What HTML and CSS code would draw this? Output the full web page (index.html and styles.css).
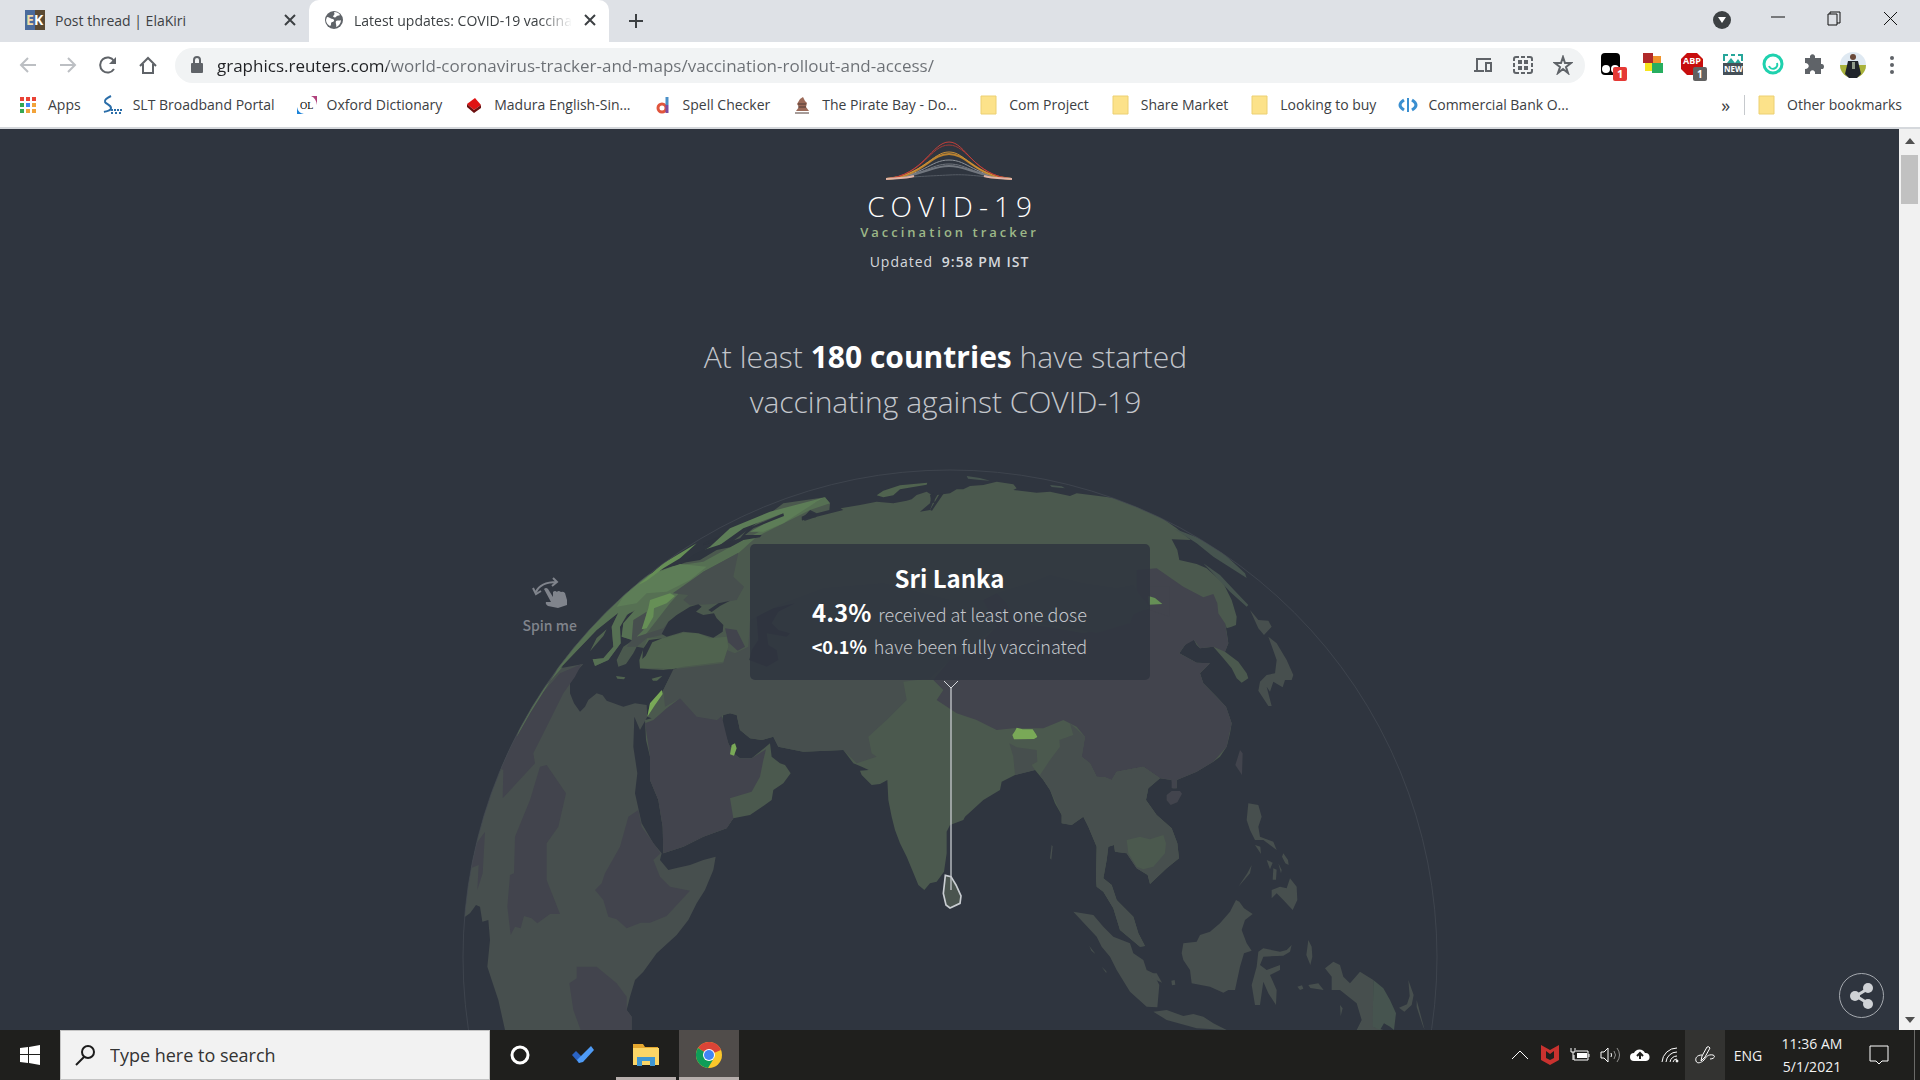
FILE: index.html
```html
<!DOCTYPE html>
<html lang="en">
<head>
    <meta charset="UTF-8">
    <meta name="viewport" content="width=device-width, initial-scale=1.0">
    <title>Latest updates: COVID-19 vaccination charts and maps</title>
    <link rel="stylesheet" href="styles.css">
</head>
<body>
    <header class="browser">
        <div class="tab-strip">
            <div class="tab">
                <svg class="favicon" viewBox="0 0 20 20" aria-hidden="true">
                    <rect width="10" height="20" fill="#4a6a9b"/>
                    <rect x="10" width="10" height="20" fill="#5a4a34"/>
                    <text x="1" y="15" font-size="14" font-weight="700" fill="#f3dca8">E</text>
                    <text x="9" y="15" font-size="14" font-weight="700" fill="#ffffff">K</text>
                </svg>
                <span class="tab-title">Post thread | ElaKiri</span>
                <button class="tab-close" aria-label="Close tab"><svg viewBox="0 0 12 12"><path d="M1 1l10 10M11 1L1 11"/></svg></button>
            </div>
            <div class="tab active">
                <svg class="favicon" viewBox="0 0 20 20" aria-hidden="true">
                    <circle cx="10" cy="10" r="9" fill="#5f6368"/>
                    <path d="M3 7c2 0 4 2 6 2 2 1 1 3-1 3-2 1 0 3-2 4-2-1-4-3-4-6zM10 2c3 0 5 1 6 3-1 1-3 0-4 2-1 1-3 0-3-1 1-1 2-1 1-4zM12 11c2-1 4 0 5-1 0 3-2 6-5 7 1-2-1-4 0-6z" fill="#fff"/>
                </svg>
                <span class="tab-title fade">Latest updates: COVID-19 vaccination</span>
                <button class="tab-close" aria-label="Close tab"><svg viewBox="0 0 12 12"><path d="M1 1l10 10M11 1L1 11"/></svg></button>
            </div>
            <button class="new-tab" aria-label="New tab"><svg viewBox="0 0 16 16"><path d="M8 1v14M1 8h14"/></svg></button>
            <div class="window-controls">
                <button aria-label="Search tabs"><svg viewBox="0 0 20 20"><circle cx="10" cy="11" r="9" fill="#3c4043"/><path d="M6 8h8l-4 6z" fill="#fff"/></svg></button>
                <button aria-label="Minimize"><svg viewBox="0 0 20 20"><path d="M3 8h14" class="thin"/></svg></button>
                <button aria-label="Restore"><svg viewBox="0 0 20 20"><path d="M4 5h9v11H4zM6 5V3h10v11h-3" class="thin"/></svg></button>
                <button aria-label="Close"><svg viewBox="0 0 20 20"><path d="M4 3l13 13M17 3L4 16" class="thin"/></svg></button>
            </div>
        </div>

        <div class="toolbar">
            <nav class="nav-buttons">
                <button class="dim" aria-label="Back"><svg viewBox="0 0 20 20"><path d="M18 10H3M10 3l-7 7 7 7"/></svg></button>
                <button class="dim" aria-label="Forward"><svg viewBox="0 0 20 20"><path d="M2 10h15M10 3l7 7-7 7"/></svg></button>
                <button aria-label="Reload"><svg viewBox="0 0 20 20"><path d="M16 14a7.500 7.500 0 1 1 0-8"/><path d="M18 2v7h-7z" class="solid"/></svg></button>
                <button aria-label="Home"><svg viewBox="0 0 20 20"><path d="M2 11l8-8 8 8M5 9v9h10V9"/></svg></button>
            </nav>
            <div class="omnibox">
                <svg class="lock" viewBox="0 0 14 18" aria-hidden="true"><rect x="1" y="7" width="12" height="10" rx="1" fill="#5f6368"/><path d="M4 7V4a3 3 0 0 1 6 0v3" fill="none" stroke="#5f6368" stroke-width="2"/></svg>
                <input class="url" type="text" aria-label="Address" value="graphics.reuters.com/world-coronavirus-tracker-and-maps/vaccination-rollout-and-access/">
                <button aria-label="Send to device"><svg viewBox="0 0 20 20"><path d="M18 4H4v11M1 16h10M13 8h5v8h-5z"/></svg></button>
                <button aria-label="QR code"><svg viewBox="0 0 20 20"><path d="M1 6V4q0-2 2-2h3M8 2h4M14 2h3q2 0 2 2v2M1 8v4M19 8v4M1 14v2q0 2 2 2h3M8 18h4M14 18h3q2 0 2-2v-2"/><path d="M5 5h4v4H5zM11 5h4v4h-4zM5 11h4v4H5zM11 11h4v4h-4z" class="solid"/></svg></button>
                <button aria-label="Bookmark"><svg viewBox="0 0 20 20"><path d="M10 2l2 6h6l-5 4 2 6-5-4-5 4 2-6-5-4h6z"/></svg></button>
            </div>
            <div class="extensions">
                <button aria-label="Tampermonkey"><svg viewBox="0 0 28 32"><rect x="2" y="4" width="19" height="22" rx="4" fill="#000"/><circle cx="7" cy="20" r="4" fill="#fff"/><circle cx="16" cy="20" r="4" fill="#fff"/><rect x="14" y="18" width="14" height="14" rx="2" fill="#e53935"/><text x="18" y="29" font-size="11" font-weight="700" fill="#fff">1</text></svg></button>
                <button aria-label="Colour extension"><svg viewBox="0 0 28 32"><path d="M4 4h10v10H4z" fill="#b02a2a"/><path d="M14 7h8v8h-8z" fill="#f0932b"/><path d="M6 14h8v8H6z" fill="#f6e51c"/><path d="M13 14h11v10H13z" fill="#27ae60"/></svg></button>
                <button aria-label="Adblock Plus"><svg viewBox="0 0 28 32"><path d="M8 4h10l6 6v10l-6 6H8l-6-6V10z" fill="#c70d0d"/><text x="4" y="15" font-size="9" font-weight="700" fill="#fff">ABP</text><rect x="14" y="18" width="14" height="14" rx="2" fill="#616161"/><text x="18" y="29" font-size="10" font-weight="700" fill="#fff">1</text></svg></button>
                <button aria-label="Screen capture"><svg viewBox="0 0 28 32"><path d="M5 12V6h4M12 6h4M19 6h4v6" fill="none" stroke="#26a69a" stroke-width="2"/><path d="M8 14l4-5 4 5 3-4 3 4z" fill="#26a69a"/><rect x="4" y="14" width="20" height="12" fill="#455058"/><text x="5" y="23" font-size="8" font-weight="700" fill="#fff">NEW</text></svg></button>
                <button aria-label="Assistant"><svg viewBox="0 0 28 32"><circle cx="14" cy="15" r="9" fill="none" stroke="#1fd1ae" stroke-width="3"/><path d="M10 17a4 4 0 0 0 8-3" fill="none" stroke="#1fd1ae" stroke-width="2"/></svg></button>
                <button aria-label="Extensions"><svg viewBox="0 0 28 32"><path d="M6 9h5c-1-5 6-5 5 0h6v6c4-1 4 6 0 5v5h-6c1-5-6-5-5 0H6v-5c5 0 5-6 0-6z" fill="#5f6368"/></svg></button>
                <button aria-label="Profile"><svg viewBox="0 0 28 32"><circle cx="14" cy="16" r="13" fill="#dfe9f2"/><path d="M1 16h26a13 13 0 0 1-26 0z" fill="#a9b23a"/><circle cx="14" cy="8" r="3" fill="#6b4a3a"/><path d="M9 12h10l3 13-4 4h-8l-4-4z" fill="#20242b"/><path d="M13 13h3v7h-3z" fill="#8f9a8a"/></svg></button>
                <button aria-label="Menu"><svg viewBox="0 0 28 32"><circle cx="14" cy="9" r="2"/><circle cx="14" cy="16" r="2"/><circle cx="14" cy="23" r="2"/></svg></button>
            </div>
        </div>

        <nav class="bookmarks">
            <a href="#"><svg viewBox="0 0 20 20"><path d="M2 2h4v4H2zM8 2h4v4H8zM14 2h4v4h-4z" fill="#ea4335"/><path d="M2 8h4v4H2z" fill="#34a853"/><path d="M8 8h4v4H8z" fill="#4285f4"/><path d="M14 8h4v4h-4zM8 14h4v4H8zM14 14h4v4h-4z" fill="#f2a33a"/><path d="M2 14h4v4H2z" fill="#34a853"/></svg>Apps</a>
            <a href="#"><svg viewBox="0 0 20 20"><path d="M8 1C4 3 1 5 2 7s6 3 6 6-4 3-7 4" fill="none" stroke="#2a6da8" stroke-width="2"/><path d="M8 14h2v2H8zM11 14h2v2h-2zM14 14h2v2h-2zM17 14h2v2h-2zM8 17h2v2H8zM12 17h2v2h-2zM16 17h2v2h-2z" fill="#2a6da8"/></svg>SLT Broadband Portal</a>
            <a href="#"><svg viewBox="0 0 20 20"><path d="M14 1h6v9q-1-7-6-9z" fill="#b0417c"/><path d="M0 12q1 6 7 7H0z" fill="#1c83d8"/><text x="3" y="14" class="serif" font-size="10">OL</text></svg>Oxford Dictionary</a>
            <a href="#"><svg viewBox="0 0 20 20"><path d="M3 9l8-6 6 7-7 5z" fill="#e01212"/><path d="M3 9l7 6 7-5v3l-7 5-7-6z" fill="#6d1010"/></svg>Madura English-Sin...</a>
            <a href="#"><svg viewBox="0 0 20 20"><circle cx="9" cy="13" r="4" fill="none" stroke="#e0553d" stroke-width="3"/><path d="M14 2v8" stroke="#4a90c8" stroke-width="3"/><path d="M14 10v8" stroke="#7b4ba0" stroke-width="3"/></svg>Spell Checker</a>
            <a href="#"><svg viewBox="0 0 20 20"><path d="M4 16l3-4-2-3 3-5 3-2 2 4 2 2-1 4 3 4z" fill="#9c6a58"/><path d="M3 18h14M6 9h8M6 12h8" stroke="#4f3a34"/></svg>The Pirate Bay - Do...</a>
            <a href="#"><svg viewBox="0 0 20 20"><path class="folder" d="M2 1h15v18H2z"/></svg>Com Project</a>
            <a href="#"><svg viewBox="0 0 20 20"><path class="folder" d="M2 1h15v18H2z"/></svg>Share Market</a>
            <a href="#"><svg viewBox="0 0 20 20"><path class="folder" d="M2 1h15v18H2z"/></svg>Looking to buy</a>
            <a href="#"><svg viewBox="0 0 20 20"><path d="M6 5q-8 5 0 10M14 5q8 5 0 10" fill="none" stroke="#3a8fd0" stroke-width="3"/><path d="M10 3v14" stroke="#3a8fd0" stroke-width="2"/></svg>Commercial Bank O...</a>
            <button class="more" aria-label="More bookmarks">»</button>
            <a href="#" class="other"><svg viewBox="0 0 20 20"><path class="folder" d="M2 1h15v18H2z"/></svg>Other bookmarks</a>
        </nav>
    </header>

    <div class="viewport">
        <main class="page">
            <div class="brand">
                <svg class="brand-mark" viewBox="0 0 126 40" aria-hidden="true">
                    <path d="M0 38C38 35 44 35 63 34S88 35 126 38" stroke="#555b64"/>
                    <path d="M0 38C38 35 44 25 63 25S88 35 126 38" stroke="#71767e" stroke-width="2"/>
                    <path d="M0 38C38 35 44 23 63 23S88 35 126 38" stroke="#71767e"/>
                    <path d="M0 38C38 35 44 19 63 19S88 35 126 38" stroke="#8e9298"/>
                    <path d="M0 38C38 35 44 13 63 13S88 35 126 38" stroke="#b9812f" stroke-width="2"/>
                    <path d="M0 38C38 34 46 11 63 11S86 34 126 38" stroke="#cf9338"/>
                    <path d="M0 38C38 34 44 4 63 4S88 34 126 38" stroke="#a33a35"/>
                    <path d="M0 38C38 34 46 1 63 1S86 34 126 38" stroke="#c2403a"/>
                    <path d="M0 38C16 37 22 37 28 35M126 38C110 37 104 37 98 35" stroke="#e0b3a4" stroke-width="2"/>
                </svg>
                <p class="brand-name">COVID-19</p>
                <p class="brand-sub">Vaccination tracker</p>
                <p class="updated">Updated <time>9:58 PM IST</time></p>
            </div>

            <h1>At least <strong>180 countries</strong> have started<br>vaccinating against COVID-19</h1>

            <section class="stage">
                <svg class="globe" viewBox="0 0 3000 1710" aria-label="Globe of vaccination rates">
                    <defs>
                        <clipPath id="sphere"><circle cx="1500" cy="1491" r="1461"/></clipPath>
                    </defs>
                    <g clip-path="url(#sphere)">
                        <!-- Africa -->
                        <path class="c-low" d="M0 1370V760L330 625 400 612 375 640 360 665 360 700 372 730 390 755 405 740 415 720 440 700 458 706 470 722 520 740 555 730 590 735 592 770 570 810 553 770 550 860 562 940 555 1000 575 1090 610 1150 635 1180 630 1200 655 1230 680 1224 720 1215 760 1200 797 1190 790 1230 765 1290 740 1330 715 1380 680 1425 620 1480 580 1535 555 1560 540 1610 530 1650 545 1670V1710H165L145 1620 125 1560 112 1520 120 1440 115 1380 97 1385 90 1340 78 1335 60 1360 45 1370Z"/>
                        <path class="c-none" d="M330 640L395 612 375 650 340 700 290 800 250 880 255 910 158 1015 160 930 100 900Z"/>
                        <path class="c-none" d="M290 915L348 1000 325 1100 290 1150 290 1260 330 1362 300 1362 262 1390 245 1375 222 1368 212 1405 195 1400 182 1425 172 1340 180 1245 192 1240 195 1130 240 1020 270 920Z"/>
                        <path class="c-none" d="M565 1050L535 1070 510 1160 465 1240 455 1270 435 1290 460 1320 475 1370 500 1378 530 1405 572 1388 600 1388 650 1368 720 1292 660 1280 630 1250 610 1200 632 1180 575 1100Z"/>
                        <path class="c-none" d="M380 1520H440L500 1570 530 1610 530 1650 545 1670V1710H392L370 1650 358 1570 380 1555Z"/>
                        <path class="c-none" d="M105 1115L98 1240 82 1290 86 1215 62 1225 72 1160Z"/>
                        <path class="c-mid2" d="M340 618L320 632 240 760 200 830 225 750Z"/>

                        <!-- Eurasia -->
                        <path class="c-russia" d="M1125 112L1140 130 1138 150 1100 160 1080 150 1055 178 1065 182 1100 170 1180 150 1172 145 1230 135 1280 125 1330 130 1370 122 1385 118 1400 105 1430 95 1445 105 1440 130 1410 155 1440 150 1448 130 1462 105 1500 100 1520 88 1540 88 1560 78 1600 75 1640 65 1690 73 1700 85 1690 90 1760 98 1800 95 1860 108 1880 100 1940 107 1975 112 2020 120 2080 145 2130 170 2180 205 2222 240 2165 238 2182 270 2188 300 2240 312 2270 325 2320 370 2345 420 2360 470 2358 495 2345 500 2330 505 2325 490 2330 515 2335 550 2325 575 2345 590 2365 605 2390 640 2395 655 2375 668 2360 655 2345 625 2320 595 2290 560 2250 565 2240 555 2232 540 2222 540 2205 555 2188 580 2240 608 2280 610 2250 640 2260 670 2300 710 2328 740 2345 790 2340 820 2330 860 2310 890 2290 905 2240 935 2180 960 2180 985 2168 985 2165 960 2130 955 2095 985 2088 1020 2120 1065 2165 1105 2182 1150 2187 1195 2150 1225 2100 1272 2093 1245 2060 1225 2030 1180 1995 1175 1992 1155 1975 1160 1970 1200 1960 1255 1985 1275 2000 1320 2050 1370 2065 1420 2085 1458 2070 1460 2010 1410 1990 1345 1960 1295 1940 1280 1938 1255 1940 1160 1915 1100 1900 1070 1865 1095 1835 1090 1835 1065 1815 1030 1800 990 1780 960 1755 930 1695 945 1655 965 1650 990 1600 1020 1545 1070 1540 1080 1500 1095 1490 1115 1490 1180 1482 1235 1460 1265 1440 1270 1423 1290 1405 1275 1395 1250 1370 1190 1350 1150 1335 1110 1325 1070 1315 1020 1312 960 1290 972 1265 975 1235 945 1230 932 1256 930 1235 920 1210 910 1180 870 1060 875 985 860 970 830 935 840 900 835 870 810 860 765 840 760 820 765 815 790 835 850 850 880 870 895 905 895 960 850 965 890 990 910 1005 915 1022 940 1000 970 970 990 965 1020 930 1045 900 1065 850 1075 830 1105 760 1130 700 1160 640 1180 638 1100 625 1020 600 960 600 890 588 840 585 780 605 775 592 770 600 730 640 690 660 650 680 625 640 630 600 628 570 625 570 600 585 565 560 560 550 580 528 612 505 620 500 600 520 560 550 540 515 530 520 490 550 455 535 460 510 500 512 550 475 600 435 618 428 598 460 595 490 560 485 500 505 458 440 510 330 625 250 640 500 380 650 330 700 310 840 250 1000 130Z"/>

                        <!-- Europe -->
                        <path class="c-mid2" d="M320 635L300 560 520 370 670 318 760 305 870 245 1125 112 1140 130 1080 150 1010 185 920 230 865 280 760 335 700 385 660 430 590 520 560 545 545 540 515 530 520 490 555 450 530 465 510 500 512 550 475 600 435 618 428 598 460 595 490 560 485 500 505 458 440 510Z"/>
                        <path class="c-mid3" d="M700 310L780 260 840 205 960 155 1125 112 1100 125 1000 190 940 215 900 215 1000 160 880 205 800 262Z"/>
                        <path class="c-mid3" d="M530 395L600 345 690 312 770 320 720 360 650 395 590 400 560 430 500 440Z"/>
                        <path class="c-low" d="M760 335L865 278 850 350 882 380 860 420 790 432 720 436 700 420 715 405 668 400Z"/>
                        <path class="c-low" d="M545 540L550 480 590 455 580 510 560 530 640 505 660 480 635 525 590 535 560 560 530 560Z"/>
                        <path class="c-high1" d="M595 445L600 420 660 400 675 408 650 430 612 445 610 470 590 505 575 508Z"/>
                        <path class="c-sea" d="M700 308L730 285 760 270 870 235 895 205 1000 160 1002 168 910 205 885 225 935 225 930 232 880 240 840 262 800 270 750 300Z"/>
                        <path class="c-sea" d="M1055 170l25-12 20 6-2 8-30 2-12 8zM760 250l50-22-20 20-30 8z"/>
                        <path class="c-sea" d="M330 625L440 500 490 465 480 490 440 510 395 570Z" opacity="0"/>
                        <path class="c-high1" d="M740 250L690 295 640 325 590 362 565 375 640 310Z"/>
                        <path class="c-mid1" d="M1432 68l-2 6-80 14-20 18-30 6-20-6 20-14 50-16zM470 508l-10 20-40 46 20-40z"/>
                        <path class="c-mid1" d="M498 648l28 4-4 6-20-2zM605 656l22-6 10-2-16 14-12 0z"/>

                        <!-- Turkey, Middle East, Central Asia -->
                        <path class="c-low" d="M670 628L820 610 830 570 855 580 895 560 900 480 1000 430 1120 385 1300 370 1420 400 1500 420 1600 420 1640 500 1500 600 1440 655 1360 665 1370 720 1310 780 1255 830 1265 880 1280 890 1220 910 1180 870 1060 875 985 860 970 830 935 840 900 835 870 810 860 765 840 760 820 765 790 785 740 775 690 715 645 740 640 690Z"/>
                        <path class="c-mid1" d="M592 535L640 535 700 518 745 520 780 535 830 530 835 560 820 605 700 620 665 628 620 625 570 625 568 600Z"/>
                        <path class="c-none" d="M825 505l35 5 25 50-22 12-28-25z"/>
                        <path class="c-none" d="M585 790L610 780 650 745 690 715 740 770 800 780 815 768 835 850 850 880 870 895 905 895 948 868 940 900 930 950 905 995 840 1015 850 1075 830 1105 760 1130 700 1160 640 1180 638 1100 625 1020 600 960 600 890Z"/>
                        <path class="c-high2" d="M592 770L600 730 635 690 638 702 615 735ZM845 855l10-5 5 15-8 22-12-4z"/>
                        <path class="c-sea" d="M635 522L655 485 680 465 720 440 745 433 755 440 738 455 760 465 792 460 800 475 820 495 818 515 790 533 745 520 700 515 650 530ZM775 450l30-20 35-8-30 16-25 18zM597 540l40-5-30 12-20 40-10 10 2-30z"/>
                        <path class="c-sea" d="M1035 430L970 445 920 470 925 540 905 570 898 600 950 620 985 600 980 570 955 555 950 520 1010 530 1020 520 985 510 965 490 985 455Z"/>

                        <!-- China and Mongolia -->
                        <path class="c-none" d="M2060 330L2120 325 2200 380 2260 412 2290 402 2302 430 2305 460 2325 490 2335 550 2325 575 2290 560 2250 565 2232 540 2205 555 2188 580 2240 608 2280 610 2250 640 2260 670 2328 740 2345 790 2330 860 2290 905 2240 935 2180 960 2180 985 2165 985 2165 960 2130 955 2080 920 2000 935 1985 960 1965 952 1940 950 1920 910 1895 890 1905 830 1880 800 1840 780 1780 805 1690 805 1640 810 1580 780 1520 760 1460 720 1480 690 1450 660 1500 600 1580 560 1640 500 1600 420 1640 400 1670 430 1700 490 1790 500 1900 520 2040 490 2050 460 2100 445 2060 400Z"/>
                        <path class="c-low" d="M1640 400L1750 365 1800 345 1900 370 2000 385 2050 375 2070 405 2100 440 2050 465 2040 490 1940 520 1850 500 1700 490 1670 430Z"/>
                        <path class="c-none" d="M2098 380h60v90l-58-20z"/>
                        <path class="c-high1" d="M2095 408l20 6 22 18-40 2z"/>

                        <!-- South-east Asia -->
                        <path class="c-low" d="M1905 830L1895 890 1920 910 1940 950 1965 952 1985 960 2000 935 2080 920 2130 955 2095 985 2088 1020 2120 1065 2165 1105 2182 1150 2187 1195 2150 1225 2100 1272 2093 1245 2060 1225 2030 1180 1995 1175 1992 1155 1975 1160 1970 1200 1960 1255 1985 1275 2000 1320 2050 1370 2065 1420 2085 1458 2070 1460 2010 1410 1990 1345 1960 1295 1940 1280 1938 1255 1940 1160 1915 1100 1900 1070 1865 1095 1835 1090 1835 1065 1800 990 1770 945 1800 900 1830 860 1828 840 1870 825 1860 790Z"/>
                        <path class="c-low" d="M1678 850L1700 862 1760 870 1762 905 1745 915 1755 930 1695 945 1690 890Z"/>
                        <path class="c-russia" d="M2030 1140L2070 1130 2100 1138 2140 1125 2148 1150 2145 1180 2110 1220 2080 1228 2060 1220 2035 1180Z"/>
                        <path class="c-high2" d="M1687 825l8-12 5-10 18 5 30 0 10 15 4 8-10 6-60 1z"/>
                        <path class="c-none" d="M2370 870l8 10-2 65-20-30zM2150 1005l15-12 25 0 6 8-14 26-20 8-12-14z"/>

                        <!-- Islands -->
                        <path class="c-low" d="M1870 1355L1930 1365 1960 1400 1990 1430 2040 1450 2050 1480 2080 1500 2090 1530 2110 1540 2128 1575 2122 1642 2090 1640 2040 1595 2000 1530 1980 1490 1955 1460 1940 1430Z"/>
                        <path class="c-low" d="M2110 1655L2150 1650 2200 1668 2230 1662 2260 1670 2290 1690 2330 1710 2240 1705 2150 1680Z"/>
                        <path class="c-low" d="M2200 1450L2240 1445 2250 1425 2280 1415 2310 1390 2340 1355 2358 1320 2368 1325 2382 1345 2408 1362 2385 1380 2375 1410 2390 1450 2405 1472 2382 1480 2370 1520 2355 1590 2335 1590 2320 1598 2280 1580 2225 1570 2220 1530 2200 1500 2195 1480Z"/>
                        <path class="c-low" d="M2440 1465L2490 1475 2510 1470 2525 1455 2520 1475 2500 1487 2440 1490 2430 1515 2450 1530 2490 1515 2490 1530 2460 1545 2480 1590 2478 1635 2455 1600 2440 1565 2430 1635 2415 1635 2405 1575 2420 1520 2425 1475Z"/>
                        <path class="c-low" d="M2395 1030L2425 1035 2435 1070 2425 1100 2430 1130 2470 1145 2480 1170 2440 1140 2415 1140 2400 1110 2390 1080ZM2500 1180l14 20 2 15-10-5-10-20zM2450 1200l18 8-8 20zM2470 1225l10 4-2 30-10 0zM2415 1155l16 5 2 22zM2485 1210l10 20-2 10z"/>
                        <path class="c-low" d="M2520 1255L2540 1280 2542 1320 2528 1350 2500 1320 2480 1300 2465 1315 2465 1290 2490 1280 2510 1285ZM2405 1215L2400 1240 2365 1280 2392 1240Z"/>
                        <path class="c-low" d="M2625 1525L2650 1505 2670 1515 2680 1550 2700 1570 2730 1535 2770 1560 2770 1700 2800 1710H2720L2735 1680 2720 1630 2670 1590 2645 1590 2645 1550Z"/>
                        <path class="c-mid0" d="M2770 1560L2800 1585 2820 1620 2838 1660 2832 1710 2820 1700 2802 1690 2790 1710 2768 1700Z"/>
                        <path class="c-low" d="M2875 1560l16 45-6 30-22 20-16-12 24-10 8-25zM2900 1620l24 90-6-14-18-55zM2575 1440l10 20 2 30-6 25-12-30zM2575 1575l30-5 16 20-40-6zM2542 1580l14-4 4 10-10 4zM2100 1540l20 0 16 28-30-14zM2164 1562l10-2 2 14-10 2zM2670 1635l8 10-6 24zM1805 1155l3 4-4 40-4-4zM1918 1458l14 18 4 6-12-10zM1955 1520l14 14 0 6z"/>
                        <path class="c-low" d="M2400 450L2425 480 2455 482 2465 500 2442 525 2425 505ZM2455 530L2480 550 2510 600 2530 645 2525 660 2505 660 2498 682 2470 665 2460 695 2450 680 2465 738 2455 738 2425 692 2430 665 2450 645 2475 640 2480 600Z"/>
                        <path class="c-mid0" d="M2260 310L2310 345 2350 388 2395 435 2390 440 2340 395ZM2170 205L2240 232 2270 248 2320 280 2385 340 2390 354 2290 290 2240 250ZM1550 48l40 6 30 8-30-2-36-4zM1800 75l35 4 10 6-40-4z"/>
                        <path class="c-sea" d="M1440 150l30-50 10 2-34 50zM1440 105l12-6 2 30-10-2z"/>
                    </g>
                    <circle class="rim" cx="1500" cy="1491" r="1461"/>
                    <path class="selected" d="M1486 1246L1503 1250 1518 1275 1533 1308 1530 1330 1500 1344 1488 1335 1480 1300 1484 1265Z"/>
                    <path class="pointer" d="M1503 681V1290"/>
                </svg>

                <div class="tooltip">
                    <h2>Sri Lanka</h2>
                    <p class="dose"><strong>4.3%</strong> received at least one dose</p>
                    <p class="full"><strong>&lt;0.1%</strong> have been fully vaccinated</p>
                    <svg class="caret" viewBox="0 0 16 9" aria-hidden="true"><path d="M1 1l7 7 7-7"/></svg>
                </div>

                <div class="spin">
                    <svg viewBox="0 0 36 32" aria-hidden="true">
                        <path d="M4 15C7 8 14 5 25 5M21 1l4 4-5 4M1 11l3 6 5-3" fill="none" stroke="currentColor" stroke-width="2"/>
                        <path d="M12 12q2-2 4 0l5 8 0-5q2-2 4 0 1-2 4 0 2-1 4 1l2 7v5l-9 3-10-2q-3-2-2-4l5 0z" fill="currentColor"/>
                    </svg>
                    <span>Spin me</span>
                </div>
            </section>

            <button class="share" aria-label="Share"><svg viewBox="0 0 24 26"><path d="M19 5L6 13l13 8" fill="none" stroke="currentColor" stroke-width="3"/><circle cx="18" cy="5" r="5"/><circle cx="5" cy="13" r="5"/><circle cx="18" cy="21" r="5"/></svg></button>
        </main>
        <div class="scrollbar">
            <svg viewBox="0 0 10 6"><path d="M0 6l5-6 5 6z"/></svg>
            <div class="thumb"></div>
            <svg class="down" viewBox="0 0 10 6"><path d="M0 0l5 6 5-6z"/></svg>
        </div>
    </div>

    <footer class="taskbar">
        <button class="task" aria-label="Start"><svg viewBox="0 0 24 24"><path d="M2 5l8-1v7H2zM11 4l11-2v9H11zM2 12h8v8l-8-1zM11 12h11v10l-11-2z" fill="#fff"/></svg></button>
        <label class="search">
            <svg viewBox="0 0 22 22" aria-hidden="true"><circle cx="13" cy="8" r="6"/><path d="M9 13l-8 8"/></svg>
            <input type="text" placeholder="Type here to search" aria-label="Type here to search">
        </label>
        <div class="apps">
            <button class="task" aria-label="Cortana"><svg viewBox="0 0 28 28"><circle cx="14" cy="14" r="8" fill="none" stroke="#fff" stroke-width="3"/></svg></button>
            <button class="task" aria-label="To Do"><svg viewBox="0 0 28 28"><path d="M3 14l4-4 7 7-4 5z" fill="#2a63c4"/><path d="M10 22l4-1L25 9l-3-4L8 19z" fill="#4f9bf5"/></svg></button>
            <button class="task open" aria-label="File Explorer"><svg viewBox="0 0 28 28"><path d="M1 3h10l2 3h13v18H1z" fill="#e5a72e"/><path d="M1 7h26v17H1z" fill="#fbd667"/><path d="M5 25v-9h18v9h-5v-5h-8v5z" fill="#3f97d3"/></svg></button>
            <button class="task open current" aria-label="Chrome"><svg viewBox="0 0 28 28"><circle cx="14" cy="14" r="13" fill="#fbc72b"/><path d="M14 14L3 7a13 13 0 0 1 23 2z" fill="#db4437"/><path d="M14 14L3 7a13 13 0 0 0 10 20l6-10z" fill="#0f9d58"/><circle cx="14" cy="14" r="6" fill="#fff"/><circle cx="14" cy="14" r="5" fill="#4285f4"/></svg></button>
        </div>
        <div class="tray">
            <button aria-label="Show hidden icons"><svg viewBox="0 0 20 20"><path d="M2 14l8-8 8 8"/></svg></button>
            <button aria-label="McAfee"><svg viewBox="0 0 20 20"><path d="M1 0l9 5 9-5v15l-9 5-9-5zM6 6v7l4 2 4-2V6l-4 3z" fill="#c8322f" fill-rule="evenodd" stroke="none"/></svg></button>
            <button aria-label="Battery"><svg viewBox="0 0 20 20"><path d="M6 6h12v9H4v-5M19 9v3M1 3v4h4V3M3 7v8"/><path d="M7 8h10v5H7z" fill="#fff" stroke="none"/></svg></button>
            <button aria-label="Volume"><svg viewBox="0 0 20 20"><path d="M1 7h3l4-4v14l-4-4H1zM11 8q1 2 0 4"/><path d="M14 6q3 4 0 8M17 3q5 7 0 14" opacity=".5"/></svg></button>
            <button aria-label="OneDrive"><svg viewBox="0 0 20 20"><path d="M4 16a4 4 0 0 1 0-8 6 6 0 0 1 11 0 4 4 0 0 1 1 8z" fill="#fff" stroke="none"/><path d="M10 14V9M7 11l3-3 3 3" stroke="#1e1e1c" stroke-width="2"/></svg></button>
            <button aria-label="Network"><svg viewBox="0 0 20 20"><path d="M2 17A15 15 0 0 1 17 3M6 17A11 11 0 0 1 17 7M10 17a7 7 0 0 1 7-6M13 17a4 4 0 0 1 4-3"/><circle cx="17" cy="16" r="1" fill="#fff"/></svg></button>
            <button class="pen" aria-label="Windows Ink"><svg viewBox="0 0 20 20"><path d="M6 16l1-5 5-9q2-1 3 1l-5 9zM7 10c-5 0-7 3-6 6s5 2 8-1c2-3 4-6 9-5 3 1 1 4-3 4"/></svg></button>
            <span class="lang">ENG</span>
            <span class="clock">11:36 AM<br>5/1/2021</span>
            <button class="notify" aria-label="Notifications"><svg viewBox="0 0 22 22"><path d="M2 2h18v15h-6l-3 3-3-3H2z"/></svg></button>
        </div>
    </footer>
</body>
</html>
```
FILE: styles.css
```css
:root {
    --page-bg: #2f353f;
    --sea: #2e343e;
    --low: #474f4e;
    --none: #42444d;
    --russia: #4b594e;
    --chrome-gray: #5f6368;
    --tabs-bg: #dee1e6;
    --taskbar-bg: #1f1f1d;
    --ui-font: "Open Sans", "Noto Sans", sans-serif;
    --page-font: "Noto Sans CJK SC", "Open Sans", sans-serif;
}

*, *::before, *::after {
    box-sizing: border-box;
    margin: 0;
    padding: 0;
}

body {
    display: flex;
    flex-direction: column;
    height: 100vh;
    overflow: hidden;
    font-family: var(--ui-font);
    font-size: 14px;
    color: #3c4043;
}

button {
    border: 0;
    background: none;
    font: inherit;
    color: inherit;
    display: flex;
    align-items: center;
    justify-content: center;
    flex-shrink: 0;
}

input {
    border: 0;
    background: none;
    font: inherit;
    outline: none;
    min-width: 0;
}

a {
    color: inherit;
    text-decoration: none;
}

/* Browser window */
.browser {
    background: #fff;
    border-bottom: 2px solid #d5d8dc;
}

.tab-strip {
    display: flex;
    align-items: stretch;
    height: 42px;
    background: var(--tabs-bg);
}

.tab {
    display: flex;
    align-items: center;
    gap: 10px;
    width: 309px;
    padding: 0 11px 2px 25px;
}

.tab.active {
    width: 300px;
    padding-left: 15px;
    background: #fff;
    border-radius: 10px 10px 0 0;
}

.favicon {
    width: 20px;
    height: 20px;
    flex-shrink: 0;
}

.tab-title {
    flex: 1;
    overflow: hidden;
    white-space: nowrap;
}

.tab-title.fade {
    mask-image: linear-gradient(to right, #000 85%, transparent);
}

.tab-close {
    width: 16px;
    height: 16px;
}

.tab-close svg {
    width: 12px;
    stroke: #3c4043;
    stroke-width: 2;
}

.new-tab {
    width: 54px;
}

.new-tab svg {
    width: 16px;
    stroke: #3c4043;
    stroke-width: 2;
}

.window-controls {
    display: flex;
    margin-left: auto;
    padding-right: 2px;
}

.window-controls button {
    width: 56px;
    height: 38px;
}

.window-controls svg {
    width: 20px;
}

.thin {
    fill: none;
    stroke: #111;
}

.toolbar {
    display: flex;
    align-items: center;
    height: 46px;
    padding: 0 10px 0 8px;
}

.nav-buttons,
.extensions {
    display: flex;
}

.nav-buttons button {
    width: 40px;
    height: 36px;
}

.nav-buttons svg,
.omnibox button svg {
    width: 20px;
    fill: none;
    stroke: var(--chrome-gray);
    stroke-width: 2;
}

.nav-buttons .dim svg {
    stroke: #bcbfc3;
}

svg .solid {
    fill: var(--chrome-gray);
    stroke: none;
}

.omnibox {
    display: flex;
    align-items: center;
    flex: 1;
    height: 35px;
    margin: 0 8px 0 7px;
    padding: 0 2px 0 15px;
    border-radius: 18px;
    background: #f1f3f4;
}

.lock {
    width: 14px;
    margin-right: 13px;
}

.url {
    flex: 1;
    height: 34px;
    font-size: 17px;
    color: transparent;
    background: linear-gradient(to right, #202124 170px, #6b6f74 170px);
    background-clip: text;
    -webkit-background-clip: text;
}

.omnibox button {
    width: 40px;
    height: 34px;
}

.extensions button {
    width: 40px;
    height: 36px;
}

.extensions svg {
    width: 28px;
    fill: var(--chrome-gray);
}

.extensions button:last-child {
    width: 37px;
}

.bookmarks {
    display: flex;
    align-items: center;
    gap: 22px;
    height: 39px;
    padding: 0 18px 6px;
    white-space: nowrap;
}

.bookmarks a {
    display: flex;
    align-items: center;
    gap: 10px;
}

.bookmarks svg {
    width: 20px;
    height: 20px;
}

.bookmarks .folder {
    fill: #fce28a;
    stroke: #ecd073;
}

.bookmarks .serif {
    font-family: "Liberation Serif", serif;
}

.more {
    margin-left: auto;
    font-size: 18px;
}

.bookmarks .other {
    padding-left: 12px;
    border-left: 1px solid #c6c9cd;
    margin-left: -8px;
}

/* Page */
.viewport {
    display: flex;
    flex: 1;
    min-height: 0;
}

.page {
    position: relative;
    flex: 1;
    min-width: 0;
    display: flex;
    flex-direction: column;
    align-items: center;
    overflow: hidden;
    background: var(--page-bg);
    color: #d5d8dc;
    font-family: var(--page-font);
    text-align: center;
}

.brand {
    display: flex;
    flex-direction: column;
    align-items: center;
    padding-top: 12px;
}

.brand-mark {
    width: 126px;
    height: 40px;
    fill: none;
}

.brand-name {
    margin-top: 8px;
    padding-left: 6px;
    font-family: "Open Sans", sans-serif;
    font-size: 28px;
    font-weight: 300;
    line-height: 34px;
    letter-spacing: 6px;
    color: #fff;
}

.brand-sub {
    font-family: "Open Sans", sans-serif;
    font-size: 13px;
    font-weight: 600;
    line-height: 18px;
    letter-spacing: 3px;
    color: #9db888;
}

.updated {
    margin-top: 12px;
    font-family: "Open Sans", sans-serif;
    font-size: 14px;
    line-height: 18px;
    letter-spacing: 1px;
}

.updated time {
    margin-left: 4px;
    font-weight: 600;
}

h1 {
    margin-top: 63px;
    padding-right: 8px;
    font-family: "Open Sans", sans-serif;
    font-size: 30px;
    font-weight: 300;
    line-height: 45px;
    color: #c3c6cb;
}

h1 strong {
    font-weight: 700;
    color: #fff;
}

.stage {
    position: relative;
    flex-shrink: 0;
    width: 1000px;
    margin-top: 36px;
}

.globe {
    display: block;
    width: 100%;
}

.c-sea { fill: var(--sea); }
.c-low { fill: var(--low); }
.c-none { fill: var(--none); }
.c-russia { fill: var(--russia); }
.c-mid0 { fill: #46544f; }
.c-mid1 { fill: #50634f; }
.c-mid2 { fill: #567053; }
.c-mid3 { fill: #5d7d57; }
.c-high1 { fill: #668f56; }
.c-high2 { fill: #79a957; }

.rim {
    fill: none;
    stroke: #454b55;
    stroke-width: 2;
}

.selected {
    fill: #4a544f;
    stroke: #c9cdd2;
    stroke-width: 5;
}

.pointer {
    stroke: #c4c8cc;
    stroke-width: 4;
}

.tooltip {
    position: absolute;
    left: 300px;
    top: 84px;
    width: 400px;
    padding: 16px 0 18px;
    border-radius: 5px;
    background: rgba(47, 53, 64, 0.85);
    line-height: 32px;
}

.tooltip h2 {
    font-size: 24px;
    font-weight: 700;
    line-height: 36px;
    color: #fff;
}

.tooltip p {
    font-size: 18px;
    font-weight: 300;
    line-height: 32px;
    color: #c3c6cb;
}

.tooltip strong {
    margin-right: 3px;
    font-weight: 700;
    color: #fff;
}

.dose strong {
    font-size: 24px;
}

.caret {
    position: absolute;
    left: 193px;
    top: 100%;
    width: 16px;
    height: 9px;
    fill: none;
    stroke: #d5d8dc;
}

.spin {
    position: absolute;
    left: 73px;
    top: 117px;
    display: flex;
    flex-direction: column;
    align-items: center;
    gap: 4px;
    font-size: 14px;
    font-weight: 500;
    line-height: 24px;
    color: #80848c;
}

.spin svg {
    width: 36px;
    height: 32px;
}

.share {
    position: absolute;
    right: 15px;
    bottom: 12px;
    width: 45px;
    height: 45px;
    border: 1px solid #a5a9af;
    border-radius: 50%;
    color: #cfd2d6;
}

.share svg {
    width: 24px;
    fill: currentColor;
}

.scrollbar {
    display: flex;
    flex-direction: column;
    align-items: center;
    width: 21px;
    padding: 9px 0 7px;
    background: #f1f1f1;
}

.scrollbar svg {
    width: 10px;
    height: 6px;
    fill: #505050;
}

.scrollbar .down {
    margin-top: auto;
}

.thumb {
    width: 17px;
    height: 49px;
    margin-top: 11px;
    background: #c1c1c1;
}

/* Taskbar */
.taskbar {
    display: flex;
    align-items: stretch;
    height: 50px;
    background: var(--taskbar-bg);
    color: #f2f2f2;
}

.task {
    width: 60px;
}

.task svg {
    width: 24px;
}

.search {
    display: flex;
    align-items: center;
    gap: 13px;
    width: 430px;
    padding: 0 14px;
    background: #f2f2f2;
    border: 1px solid #c4c4c4;
}

.search svg {
    width: 22px;
    fill: none;
    stroke: #1c1c1c;
    stroke-width: 2;
}

.search input {
    flex: 1;
    font-size: 18px;
}

.search input::placeholder {
    color: #333;
    opacity: 1;
}

.apps {
    display: flex;
    gap: 3px;
}

.apps .task svg {
    width: 28px;
}

.task.open {
    border-bottom: 3px solid #b6aeac;
    padding-top: 3px;
}

.task.current {
    background: #504c4a;
}

.tray {
    display: flex;
    align-items: stretch;
    margin-left: auto;
    padding-right: 5px;
}

.tray button {
    width: 30px;
}

.tray svg {
    width: 20px;
    fill: none;
    stroke: #fff;
}

.tray .pen {
    width: 40px;
    background: #333331;
}

.lang {
    width: 46px;
    align-self: center;
    text-align: center;
}

.clock {
    width: 82px;
    align-self: center;
    text-align: center;
    line-height: 23px;
}

.tray .notify {
    width: 62px;
    padding-right: 10px;
    border-right: 1px solid #6a6a68;
}

.tray .notify svg {
    width: 22px;
}
```
